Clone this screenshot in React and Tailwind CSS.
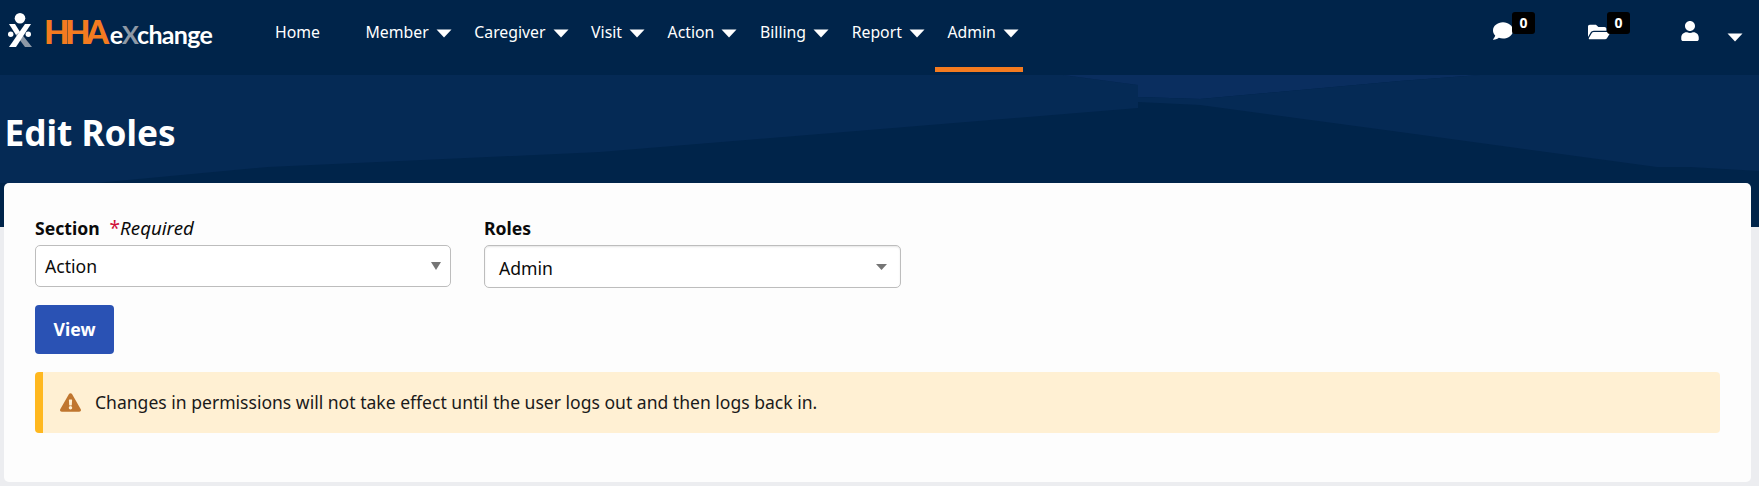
import { FaComment, FaFolderOpen, FaUser, FaExclamationTriangle } from 'react-icons/fa'

const NAV = ['Member', 'Caregiver', 'Visit', 'Action', 'Billing', 'Report', 'Admin']

function Caret({ className = '' }) {
  return (
    <svg viewBox="0 0 16 9" className={`w-[16px] h-[9px] shrink-0 ${className}`}>
      <path d="M0.5 0.5 H15.5 L8 8.5 Z" fill="currentColor" />
    </svg>
  )
}

function Logo() {
  return (
    <div className="w-[275px] h-[75px] flex items-start shrink-0">
      <svg viewBox="0 0 26 36" className="ml-[7px] mt-[13px] w-[26px] h-[36px] shrink-0">
        <circle cx="13" cy="5.3" r="5.3" fill="#fff" />
        <path d="M9 22 L13 19 L25 34 H18 Z" fill="#8e99a6" />
        <path d="M2 11 H8 L13 19 L9 22 Z" fill="#fff" />
        <path d="M24 11 H18 L2 34 H9 Z" fill="#fff" />
        <circle cx="3.7" cy="21.3" r="2.7" fill="#fff" />
        <circle cx="21.3" cy="21.3" r="2.7" fill="#fff" />
      </svg>
      <div className="ml-[11px] mt-[12px] flex items-baseline font-['Lato',sans-serif] font-bold leading-[38px]">
        <span className="text-[33px] font-black text-[#f47b20] tracking-[-4.5px]">HHA</span>
        <span className="text-[25px] text-white tracking-[-0.7px] ml-[5px]">
          e<span className="text-[#8e99a6]">X</span>change
        </span>
      </div>
    </div>
  )
}

function NavItem({ label, active }) {
  return (
    <div className="relative h-[72px] pb-[6px] flex items-center gap-[7px]">
      <span>{label}</span>
      <Caret />
      {active && <span className="absolute bottom-0 left-[-12px] right-[-4px] h-[5px] bg-[#f47b20]" />}
    </div>
  )
}

function Badge({ children }) {
  return (
    <span className="absolute top-[12px] left-[19px] w-[23px] h-[22px] rounded-[3px] bg-black text-white text-[14px] font-bold leading-[22px] text-center">
      {children}
    </span>
  )
}

function Header() {
  return (
    <header className="h-[75px] bg-[#00244a] flex items-start text-white text-[15.8px]">
      <Logo />
      <nav className="flex items-start gap-[22.6px]">
        <div className="h-[72px] pb-[6px] flex items-center mr-[23px]">Home</div>
        {NAV.map((n) => <NavItem key={n} label={n} active={n === 'Admin'} />)}
      </nav>
      <div className="ml-auto flex items-start pr-[16px] h-[75px]">
        <div className="relative w-[95px] h-[75px]">
          <FaComment className="absolute left-0 top-[21px] text-[20px]" />
          <Badge>0</Badge>
        </div>
        <div className="relative w-[92px] h-[75px]">
          <FaFolderOpen className="absolute left-0 top-[21px] text-[22px]" />
          <Badge>0</Badge>
        </div>
        <FaUser className="mt-[21px] text-[20px]" />
        <Caret className="ml-[27px] mt-[33px]" />
      </div>
    </header>
  )
}

function Hero() {
  return (
    <div className="relative h-[152px] bg-[#00244a] overflow-hidden">
      <svg viewBox="0 0 1759 152" preserveAspectRatio="none" className="absolute inset-0 w-full h-full">
        <path d="M0 0 H1063 L1138 10 V33 L600 77 L268 92 L96 108 H0 Z" fill="#052a55" />
        <path d="M1063 0 H1480 L1400 6 L1200 24 L1138 22 V10 Z" fill="#0a2e5f" />
        <path d="M1138 27 L1200 30 L1400 57 L1657 92 H1690 L1759 96 V0 H1480 L1400 6 L1200 24 L1138 22 Z" fill="#052a55" />
      </svg>
      <h1 className="relative pl-[4.5px] pt-[34px] text-[35.2px] leading-[46px] font-bold text-white">Edit Roles</h1>
    </div>
  )
}

function Select({ value, h, textClass, arrow }) {
  return (
    <div className={`rounded-[5px] border border-[#bdbdbd] bg-white flex items-center justify-between ${h}`}>
      <span className={textClass}>{value}</span>
      {arrow}
    </div>
  )
}

export default function App() {
  return (
    <div className="min-h-screen bg-[#ecedf0] font-['Noto_Sans',sans-serif] text-[17.6px]">
      <Header />
      <Hero />
      <main className="relative -mt-[44px] ml-[4px] mr-[8px] rounded-[5px] bg-[#fdfdfd] pt-[33px] pb-[49px] px-[31px] text-[#0b0b0b]">
        <div className="flex gap-[33px] items-start">
          <div className="w-[416px]">
            <div className="h-[24px] mb-[5px] leading-[24px]">
              <span className="font-bold">Section</span>
              <span className="text-[#d0103a] text-[19px] ml-[10px]">*</span>
              <span className="italic text-[18.7px]">Required</span>
            </div>
            <Select
              value="Action"
              h="h-[42px]"
              textClass="pl-[9px]"
              arrow={
                <svg viewBox="0 0 10 8" className="w-[10px] h-[8px] mr-[9px] -mt-[1px]"><path d="M0 0 H10 L5 8 Z" fill="#757575" /></svg>
              }
            />
          </div>
          <div className="w-[417px]">
            <div className="h-[24px] mb-[5px] leading-[24px] font-bold">Roles</div>
            <Select
              value="Admin"
              h="h-[43px] shadow-[inset_0_1px_2px_rgba(0,0,0,0.1)]"
              textClass="pl-[14px] pt-[4px]"
              arrow={
                <svg viewBox="0 0 11 6" className="w-[11px] h-[6px] mr-[13px]"><path d="M0 0 H11 L5.5 6 Z" fill="#757575" /></svg>
              }
            />
          </div>
        </div>
        <button className="mt-[17px] block w-[79px] h-[49px] rounded-[4px] bg-[#2a52b4] text-white font-bold">View</button>
        <div className="mt-[18px] h-[61px] rounded-[4px] border-l-[8px] border-[#ffb81f] bg-[#fff0d3] flex items-center pl-[17px] gap-[14px] text-[17.56px] text-[#1a1a1a]">
          <FaExclamationTriangle className="text-[21px] text-[#c0762f] shrink-0" />
          <span>Changes in permissions will not take effect until the user logs out and then logs back in.</span>
        </div>
      </main>
    </div>
  )
}
